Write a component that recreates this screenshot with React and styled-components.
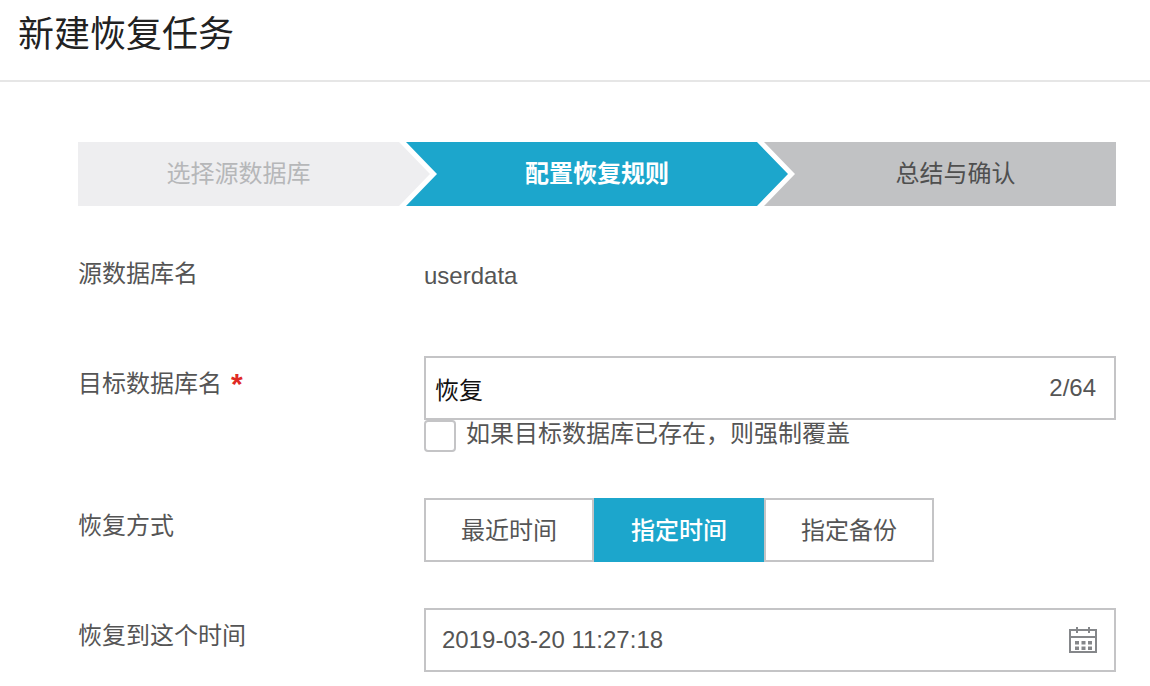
import React from "react";
import styled, { createGlobalStyle } from "styled-components";

const Global = createGlobalStyle`
  html, body { margin: 0; padding: 0; background: #fff; }
  body { width: 1150px; height: 686px; overflow: hidden; font-family: "Liberation Sans", "Noto Sans CJK SC", sans-serif; }
  * { box-sizing: border-box; }
`;

const Header = styled.header`
  height: 82px;
  border-bottom: 2px solid #e6e6e6;
  padding-left: 18px;
`;
const Title = styled.h1`
  margin: 0;
  font-size: 36px;
  font-weight: 400;
  line-height: 70px;
  color: #222;
`;
const Body = styled.main`
  padding: 60px 34px 0 78px;
`;
const Steps = styled.div`
  display: flex;
  height: 64px;
  margin-bottom: 46px;
`;
const clips = {
  first: "polygon(0 0, 321px 0, 352px 32px, 321px 64px, 0 64px)",
  middle: "polygon(0 0, 351px 0, 382px 32px, 351px 64px, 0 64px, 31px 32px)",
  last: "polygon(0 0, 352px 0, 352px 64px, 0 64px, 31px 32px)",
};
const Step = styled.div`
  width: ${(p) => (p.$kind === "middle" ? 382 : 352)}px;
  margin-left: ${(p) => (p.$kind === "first" ? 0 : -24)}px;
  padding: ${(p) => (p.$kind === "first" ? "0 31px 6px 0" : p.$kind === "last" ? "0 0 6px 31px" : "0 0 6px")};
  clip-path: ${(p) => clips[p.$kind]};
  background: ${(p) => p.$bg};
  color: ${(p) => p.$fg};
  font-size: 24px;
  font-weight: ${(p) => (p.$kind === "middle" ? 700 : 400)};
  display: flex;
  align-items: center;
  justify-content: center;
`;
const Row = styled.div`
  display: flex;
  align-items: flex-start;
  margin-bottom: ${(p) => p.$gap}px;
`;
const Label = styled.div`
  width: 346px;
  flex: none;
  font-size: 24px;
  line-height: ${(p) => p.$lh}px;
  color: #555;
`;
const Required = styled.span`
  color: #e02a24;
  margin-left: 9px;
  font-size: 30px;
  font-weight: 700;
  line-height: 1;
  vertical-align: -2px;
`;
const Value = styled.div`
  font-size: 24px;
  line-height: 44px;
  padding-top: 2px;
  color: #555;
`;
const Field = styled.div`
  flex: 1;
`;
const Box = styled.div`
  height: 64px;
  border: 2px solid #c4c4c6;
  display: flex;
  align-items: center;
  justify-content: space-between;
  font-size: 24px;
  color: #555;
  padding: 0 ${(p) => p.$right}px 0 ${(p) => p.$left}px;
`;
const Typed = styled.span`
  color: #111;
`;
const CheckRow = styled.label`
  display: flex;
  align-items: flex-start;
  font-size: 24px;
  line-height: 28px;
  color: #555;
`;
const Check = styled.span`
  width: 32px;
  height: 32px;
  border: 2px solid #c4c4c6;
  border-radius: 4px;
  margin-right: 10px;
  flex: none;
`;
const Segments = styled.div`
  display: flex;
`;
const Segment = styled.div`
  width: 170px;
  height: 64px;
  padding-bottom: 4px;
  border: 2px solid ${(p) => (p.$active ? "#1ca6cc" : "#c4c4c6")};
  background: ${(p) => (p.$active ? "#1ca6cc" : "#fff")};
  color: ${(p) => (p.$active ? "#fff" : "#555")};
  font-size: 24px;
  font-weight: ${(p) => (p.$active ? 500 : 400)};
  display: flex;
  align-items: center;
  justify-content: center;
`;

const CalendarIcon = () => (
  <svg width="30" height="26" viewBox="0 0 30 26" fill="none" stroke="#85878a" strokeWidth="2" style={{ display: "block" }}>
    <rect x="2" y="3" width="26" height="22" />
    <path d="M2 10h26M9 0v6M21 0v6" />
    <path d="M7 14h4v3.500H7zM13.500 14h4v3.500h-4zM20 14h4v3.500h-4zM7 19.500h4v3.500H7zM13.500 19.500h4v3.500h-4zM20 19.500h4v3.500h-4z" fill="#85878a" stroke="none" />
  </svg>
);

export default function App() {
  return (
    <>
      <Global />
      <Header>
        <Title>新建恢复任务</Title>
      </Header>
      <Body>
        <Steps>
          <Step $kind="first" $bg="#eeeef0" $fg="#b6b7b9">选择源数据库</Step>
          <Step $kind="middle" $bg="#1ca6cc" $fg="#fff">配置恢复规则</Step>
          <Step $kind="last" $bg="#c1c2c4" $fg="#4f4f4f">总结与确认</Step>
        </Steps>
        <Row $gap={58}>
          <Label $lh={44}>源数据库名</Label>
          <Value>userdata</Value>
        </Row>
        <Row $gap={46}>
          <Label $lh={56}>目标数据库名<Required>*</Required></Label>
          <Field>
            <Box $left={9} $right={18}>
              <Typed>恢复</Typed>
              <span>2/64</span>
            </Box>
            <CheckRow>
              <Check />
              如果目标数据库已存在，则强制覆盖
            </CheckRow>
          </Field>
        </Row>
        <Row $gap={46}>
          <Label $lh={56}>恢复方式</Label>
          <Segments>
            <Segment>最近时间</Segment>
            <Segment $active>指定时间</Segment>
            <Segment>指定备份</Segment>
          </Segments>
        </Row>
        <Row $gap={0}>
          <Label $lh={56}>恢复到这个时间</Label>
          <Field>
            <Box $left={16} $right={16}>
              <span>2019-03-20 11:27:18</span>
              <CalendarIcon />
            </Box>
          </Field>
        </Row>
      </Body>
    </>
  );
}
